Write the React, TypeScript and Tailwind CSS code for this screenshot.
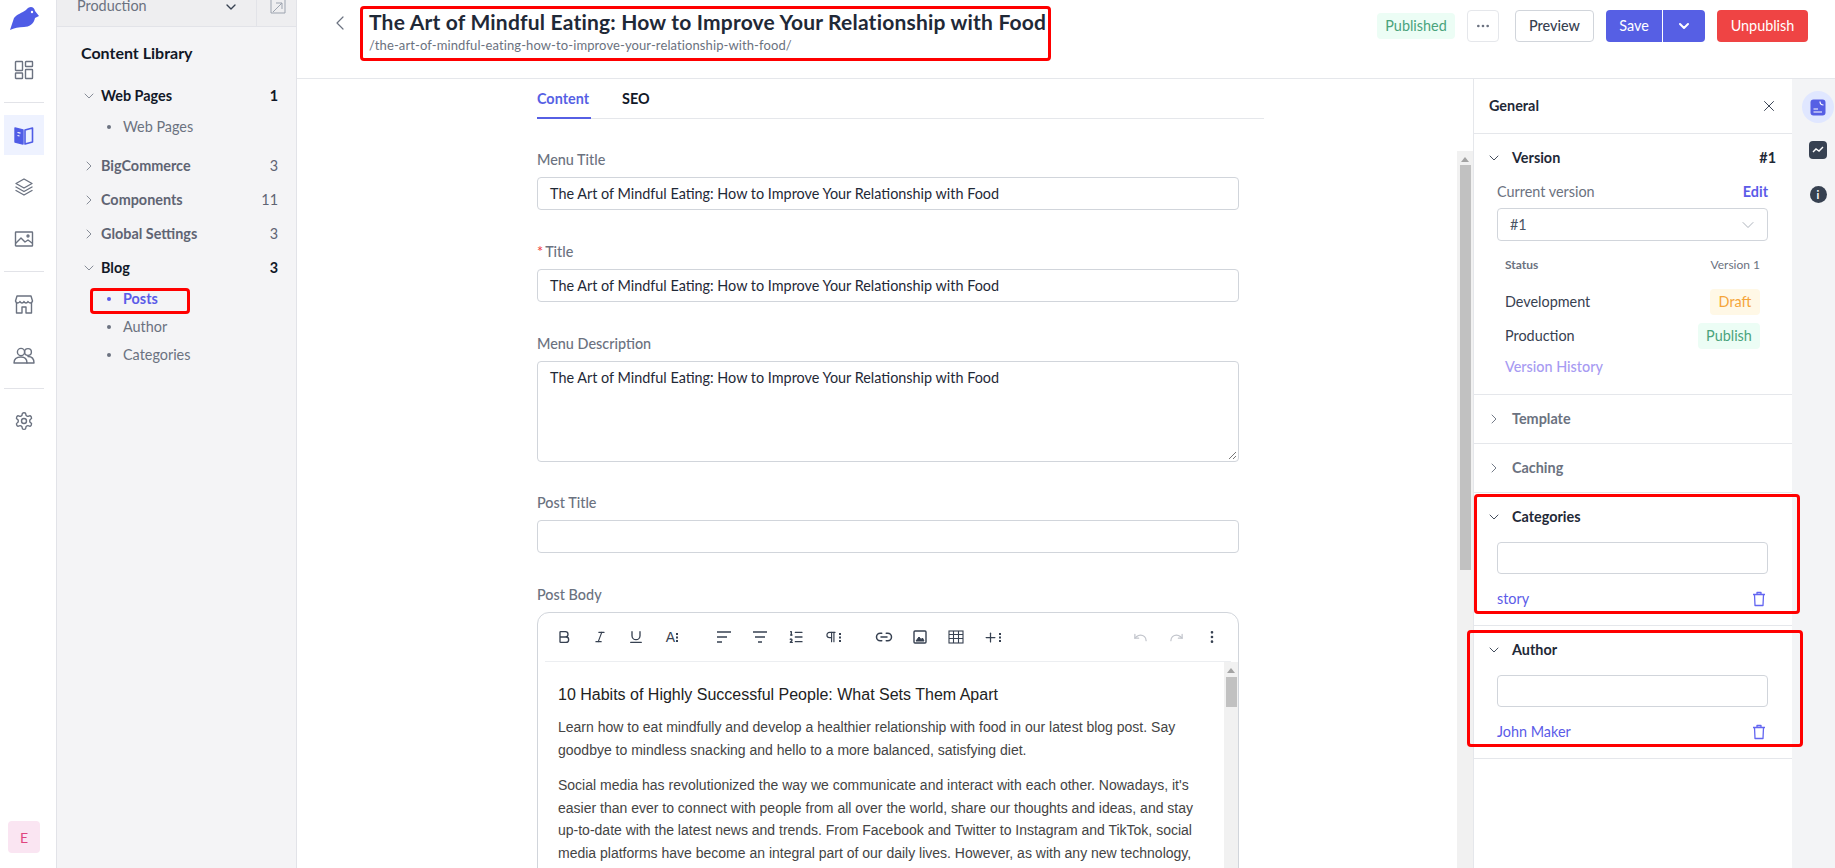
import React from "react";
import {
  ChevronDown, ChevronRight, ChevronLeft, X, MoreHorizontal, MoreVertical,
  Bold, Italic, Underline, Link2, Plus, Undo, Redo, ListOrdered, Pilcrow,
} from "lucide-react";

const ui = "font-['Lato',sans-serif]";

function RailDivider() {
  return <div className="h-px w-10 bg-[#e2e3e8]" />;
}

function RailIcon({ children, active }: { children: React.ReactNode; active?: boolean }) {
  return (
    <div className={`w-10 h-10 flex items-center justify-center ${active ? "bg-[#eef2ff]" : ""}`}>
      {children}
    </div>
  );
}

const stroke = { fill: "none", stroke: "#6b7280", strokeWidth: 1.4, strokeLinecap: "round", strokeLinejoin: "round" } as const;

function LeftRail() {
  return (
    <div className="w-[57px] shrink-0 h-full bg-white border-r border-[#e2e3e8] flex flex-col pl-1">
      <div className="h-[42px] flex items-start pl-[5px] pt-[6px]">
        <svg width="30" height="25" viewBox="0 0 30 25">
          <path d="M1 24 L5 12 C8 8 13 7 17 4 C20 0 25 0 26 5 L30 10 L26 12 C25 18 20 21 15 21 C10 21 5 22 1 24Z" fill="#4f5ce6" />
          <circle cx="23" cy="6" r="1.2" fill="#fff" />
        </svg>
      </div>
      <div className="h-[8px]" />
      <div className="h-[40px] w-10 flex items-center justify-center">
        <svg width="20" height="20" viewBox="0 0 20 20" {...stroke}>
          <rect x="1.5" y="1.5" width="7" height="9" rx="0.5" /><rect x="11.5" y="1.5" width="7" height="5" rx="0.5" />
          <rect x="1.5" y="13" width="7" height="5.5" rx="0.5" /><rect x="11.5" y="9.5" width="7" height="9" rx="0.5" />
        </svg>
      </div>
      <div className="h-3" />
      <RailDivider />
      <div className="h-3" />
      <RailIcon active>
        <svg width="20" height="20" viewBox="0 0 20 20">
          <path d="M1 3 L9 5 V19 L1 17Z" fill="#4f5ce6" stroke="#4f5ce6" strokeWidth="1.4" strokeLinejoin="round" />
          <path d="M11 5 L18.5 3 V17 L11 19Z" fill="none" stroke="#4f5ce6" strokeWidth="1.6" strokeLinejoin="round" />
          <path d="M3.5 7.5 L6.5 8.2 M3.5 10.5 L5.5 11" stroke="#fff" strokeWidth="1.2" />
        </svg>
      </RailIcon>
      <div className="h-3" />
      <RailIcon>
        <svg width="20" height="20" viewBox="0 0 20 20" {...stroke}>
          <path d="M10 2 L18 6.5 L10 11 L2 6.5Z" /><path d="M2 10 L10 14.5 L18 10" /><path d="M2 13.5 L10 18 L18 13.5" />
        </svg>
      </RailIcon>
      <div className="h-3" />
      <RailIcon>
        <svg width="20" height="20" viewBox="0 0 20 20" {...stroke}>
          <rect x="1.5" y="3" width="17" height="14" rx="0.5" /><path d="M2 14 L7 9 L11 13 L14 11 L18 14" /><circle cx="14" cy="7" r="1" />
        </svg>
      </RailIcon>
      <div className="h-3" />
      <RailDivider />
      <div className="h-3" />
      <RailIcon>
        <svg width="20" height="20" viewBox="0 0 20 20" {...stroke}>
          <path d="M2.5 9 V19 H8 V13 H12 V19 H17.5 V9" /><path d="M3 2 H17 L18.5 7 C18 9.5 15 9.5 14 7.5 C13 9.5 11 9.5 10 7.5 C9 9.5 7 9.5 6 7.5 C5 9.5 2 9.5 1.5 7 Z" />
        </svg>
      </RailIcon>
      <div className="h-3" />
      <RailIcon>
        <svg width="22" height="20" viewBox="0 0 22 20" {...stroke}>
          <circle cx="8" cy="6" r="3.6" /><circle cx="15" cy="6" r="3.4" /><path d="M1 17 C1 12 4 11 8 11 C12 11 14 13 14 17 Z" /><path d="M15 10.5 C19 10.5 21 12.5 21 17 H14" />
        </svg>
      </RailIcon>
      <div className="h-3" />
      <RailDivider />
      <div className="h-3" />
      <RailIcon>
        <svg width="20" height="20" viewBox="0 0 24 24" {...stroke} strokeWidth={1.7}>
          <path d="M12.22 2h-.44a2 2 0 0 0-2 2v.18a2 2 0 0 1-1 1.73l-.43.25a2 2 0 0 1-2 0l-.15-.08a2 2 0 0 0-2.73.73l-.22.38a2 2 0 0 0 .73 2.73l.15.1a2 2 0 0 1 1 1.72v.51a2 2 0 0 1-1 1.74l-.15.09a2 2 0 0 0-.73 2.73l.22.38a2 2 0 0 0 2.73.73l.15-.08a2 2 0 0 1 2 0l.43.25a2 2 0 0 1 1 1.73V20a2 2 0 0 0 2 2h.44a2 2 0 0 0 2-2v-.18a2 2 0 0 1 1-1.73l.43-.25a2 2 0 0 1 2 0l.15.08a2 2 0 0 0 2.73-.73l.22-.39a2 2 0 0 0-.73-2.73l-.15-.08a2 2 0 0 1-1-1.74v-.5a2 2 0 0 1 1-1.74l.15-.09a2 2 0 0 0 .73-2.73l-.22-.38a2 2 0 0 0-2.73-.73l-.15.08a2 2 0 0 1-2 0l-.43-.25a2 2 0 0 1-1-1.73V4a2 2 0 0 0-2-2z" />
          <circle cx="12" cy="12" r="3" />
        </svg>
      </RailIcon>
      <div className="flex-1" />
      <div className="w-8 h-8 ml-1 mb-[15px] rounded bg-[#fae5f2] flex items-center justify-center text-[14px] text-[#e0457f]">E</div>
    </div>
  );
}

function TreeRow({ label, count, open, strong }: { label: string; count: string; open?: boolean; strong?: boolean }) {
  return (
    <div className={`flex items-center h-[34px] pl-[24px] pr-[18px] text-[14.4px] ${strong ? "text-[#111827]" : "text-[#5f6473]"}`}>
      {open ? (
        <ChevronDown size={16} strokeWidth={1.2} className="text-[#6b7280]" />
      ) : (
        <ChevronRight size={16} strokeWidth={1.2} className="text-[#6b7280]" />
      )}
      <span className="ml-[4px] flex-1 font-bold">{label}</span>
      <span className={strong ? "font-bold" : ""}>{count}</span>
    </div>
  );
}

function SubRow({ label, active }: { label: string; active?: boolean }) {
  return (
    <div className={`flex items-center h-7 pl-[50px] text-[14.4px] ${active ? "text-[#5b5be8] font-bold" : "text-[#6b7280]"}`}>
      <span className={`w-1 h-1 rounded-full mr-[12px] ${active ? "bg-[#5b5be8]" : "bg-[#6b7280]"}`} />
      {label}
    </div>
  );
}

function Sidebar() {
  return (
    <div className="w-[240px] shrink-0 h-full bg-[#f4f4f6] border-r border-[#e2e3e8] flex flex-col">
      <div className="h-[27px] shrink-0 bg-[#eeeef0] border-b border-[#e2e3e8] flex items-center text-[14.4px] text-[#6b7280]">
        <span className="pl-5 -mt-[15px] flex-1">Production</span>
        <ChevronDown size={16} className="-mt-3 mr-[17px] text-[#374151]" />
        <div className="w-px h-full bg-[#e2e3e8]" />
        <svg width="16" height="16" viewBox="0 0 16 16" fill="none" stroke="#9ca3af" className="mr-[10px] -mt-3 ml-[13px]">
          <path d="M1 1 V14 H15 V1 M3 13 L12 4 M6 4 H12 V10" />
        </svg>
      </div>
      <div className="pl-6 mt-4 h-5 flex items-center text-[16px] font-bold text-[#111827]">Content Library</div>
      <div className="mt-[16px]">
        <TreeRow label="Web Pages" count="1" open strong />
        <SubRow label="Web Pages" />
        <div className="h-[8px]" />
        <TreeRow label="BigCommerce" count="3" />
        <TreeRow label="Components" count="11" />
        <TreeRow label="Global Settings" count="3" />
        <TreeRow label="Blog" count="3" open strong />
        <SubRow label="Posts" active />
        <SubRow label="Author" />
        <SubRow label="Categories" />
      </div>
    </div>
  );
}

function TopBar() {
  return (
    <div className="h-[79px] shrink-0 border-b border-[#e5e7eb] bg-white flex items-start">
      <ChevronLeft size={24} strokeWidth={1.2} className="ml-[31px] mt-[11px] text-[#6b7280]" />
      <div className="ml-[17px] mt-[9px] flex-1">
        <div className="text-[21px] leading-[26px] font-bold tracking-[0.2px] text-[#1f2937]">
          The Art of Mindful Eating: How to Improve Your Relationship with Food
        </div>
        <div className="text-[13px] leading-[20px] tracking-[0.1px] text-[#6b7280]">/the-art-of-mindful-eating-how-to-improve-your-relationship-with-food/</div>
      </div>
      <div className="flex items-center mt-[10px] mr-[27px] text-[14.4px]">
        <div className="h-[26px] w-[78px] rounded bg-[#ecfdf5] text-[#4aa37c] flex items-center justify-center">Published</div>
        <div className="ml-3 w-8 h-8 rounded border border-[#e5e7eb] flex items-center justify-center">
          <MoreHorizontal size={16} className="text-[#6b7280]" />
        </div>
        <div className="ml-4 w-[79px] h-8 rounded border border-[#d1d5db] flex items-center justify-center font-medium text-[#374151]">Preview</div>
        <div className="ml-3 w-[56px] h-8 rounded-l bg-[#565fe4] text-white flex items-center justify-center">Save</div>
        <div className="ml-px w-[42px] h-8 rounded-r bg-[#565fe4] text-white flex items-center justify-center">
          <ChevronDown size={16} strokeWidth={3} />
        </div>
        <div className="ml-3 w-[91px] h-8 rounded bg-[#ef4444] text-white flex items-center justify-center">Unpublish</div>
      </div>
    </div>
  );
}

function FieldLabel({ children }: { children: React.ReactNode }) {
  return <div className="h-[22px] -mt-px mb-[6px] flex items-center text-[14.4px] text-[#6b7280] font-medium">{children}</div>;
}

function Field({ label, h = "h-[33px]", value, required, gap = "mb-[32px]", resize }: { label: string; h?: string; value?: string; required?: boolean; gap?: string; resize?: boolean }) {
  return (
    <div className={gap}>
      <FieldLabel>
        {required && <span className="text-[#ef4444] mr-[2px]">*</span>}
        {label}
      </FieldLabel>
      <div className={`relative ${h} w-[702px] rounded border border-[#d1d5db] px-3 flex items-start pt-[5px] text-[14.4px] text-[#1f2937]`}>
        {value}
        {resize && (
          <svg width="9" height="9" viewBox="0 0 9 9" stroke="#777" className="absolute right-px bottom-px">
            <path d="M1 8 L8 1 M5 8 L8 5" />
          </svg>
        )}
      </div>
    </div>
  );
}

function Tool({ children, cls = "" }: { children: React.ReactNode; cls?: string }) {
  return <div className={`w-[18px] h-[18px] flex items-center justify-center text-[#374151] ${cls}`}>{children}</div>;
}

function Dots() {
  return (
    <svg width="2" height="10" viewBox="0 0 2 10" fill="#374151" className="ml-px">
      <rect y="1" width="2" height="2" /><rect y="4.5" width="2" height="2" /><rect y="8" width="2" height="2" />
    </svg>
  );
}

function Editor() {
  return (
    <div className="w-[702px] h-[300px] rounded-xl border border-[#d1d5db] overflow-hidden">
      <div className="h-[49px] mx-[7px] border-b border-[#eceef1] flex items-center pl-[10px] pr-[10px]">
        <Tool><Bold size={16} strokeWidth={2} /></Tool>
        <Tool cls="ml-[18px]"><Italic size={14} /></Tool>
        <Tool cls="ml-[18px]"><Underline size={16} /></Tool>
        <Tool cls="ml-[18px] text-[14px]"><span className="font-['Liberation_Sans',sans-serif]">A</span><Dots /></Tool>
        <Tool cls="ml-[34px]">
          <svg width="16" height="14" viewBox="0 0 16 14" stroke="#374151" strokeWidth="1.5"><path d="M1 2 H15 M1 7 H11 M1 12 H6" /></svg>
        </Tool>
        <Tool cls="ml-[18px]">
          <svg width="16" height="14" viewBox="0 0 16 14" stroke="#374151" strokeWidth="1.5"><path d="M1 2 H15 M3 7 H13 M6 12 H10" /></svg>
        </Tool>
        <Tool cls="ml-[18px]"><ListOrdered size={16} /></Tool>
        <Tool cls="ml-[18px]"><Pilcrow size={14} /><Dots /></Tool>
        <Tool cls="ml-[34px]"><Link2 size={18} strokeWidth={2} /></Tool>
        <Tool cls="ml-[18px]">
          <svg width="14" height="14" viewBox="0 0 14 14" fill="none" stroke="#374151"><rect x="1" y="1" width="12" height="12" strokeWidth="1.4" rx="1" /><path d="M3 11 L6 7 L8 9.5 L9.5 8 L11 11Z" fill="#374151" /></svg>
        </Tool>
        <Tool cls="ml-[18px]">
          <svg width="16" height="14" viewBox="0 0 16 14" fill="none" stroke="#374151" strokeWidth="1.1"><rect x="1" y="1" width="14" height="12" /><path d="M1 4.5 H15 M1 8.5 H15 M5.5 1 V13 M10.5 1 V13" /></svg>
        </Tool>
        <Tool cls="ml-[18px]"><Plus size={15} strokeWidth={2} /><Dots /></Tool>
        <div className="flex-1" />
        <Tool cls="text-[#c2c5cc]"><Undo size={15} /></Tool>
        <Tool cls="ml-[18px] text-[#c2c5cc]"><Redo size={15} /></Tool>
        <Tool cls="ml-[18px]"><MoreVertical size={16} /></Tool>
      </div>
      <div className="relative h-[250px] pl-5 pr-[22px] font-['Liberation_Sans',sans-serif] text-[14px] leading-[22.5px] text-[#444]">
        <div className="pt-[22px] text-[16px] leading-[22px] text-[#222]">10 Habits of Highly Successful People: What Sets Them Apart</div>
        <p className="mt-[10px]">Learn how to eat mindfully and develop a healthier relationship with food in our latest blog post. Say goodbye to mindless snacking and hello to a more balanced, satisfying diet.</p>
        <p className="mt-[13px]">Social media has revolutionized the way we communicate and interact with each other. Nowadays, it's easier than ever to connect with people from all over the world, share our thoughts and ideas, and stay up-to-date with the latest news and trends. From Facebook and Twitter to Instagram and TikTok, social media platforms have become an integral part of our daily lives. However, as with any new technology,</p>
        <div className="absolute right-0 top-0 bottom-0 w-[14px] bg-[#f1f1f1] flex flex-col items-center">
          <div className="mt-[6px] w-0 h-0 border-x-[4px] border-x-transparent border-b-[5px] border-b-[#a3a3a3]" />
          <div className="mt-[4px] w-[11px] h-[30px] bg-[#c1c1c1]" />
        </div>
      </div>
    </div>
  );
}

function MainForm() {
  return (
    <div className="relative flex-1 min-w-0 h-full overflow-hidden">
      <div className="ml-[240px] w-[727px]">
        <div className="flex h-[40px] border-b border-[#e5e7eb] text-[14.4px] font-bold">
          <div className="w-[54px] h-[40px] pt-px border-b-2 border-[#565fe4] text-[#565fe4] flex items-center">Content</div>
          <div className="ml-[31px] h-[40px] flex items-center text-[#111827]">SEO</div>
        </div>
        <div className="mt-[31px]">
          <Field label="Menu Title" value="The Art of Mindful Eating: How to Improve Your Relationship with Food" />
          <Field label="Title" required value="The Art of Mindful Eating: How to Improve Your Relationship with Food" />
          <Field label="Menu Description" h="h-[101px]" gap="mb-[31px]" resize value="The Art of Mindful Eating: How to Improve Your Relationship with Food" />
          <Field label="Post Title" />
          <FieldLabel>Post Body</FieldLabel>
          <Editor />
        </div>
      </div>
      <div className="absolute right-0 top-[72px] bottom-0 w-[16px] bg-[#f1f1f1] flex flex-col items-center">
        <div className="mt-[6px] w-0 h-0 border-x-[4px] border-x-transparent border-b-[5px] border-b-[#a3a3a3]" />
        <div className="mt-[3px] w-[11px] h-[405px] bg-[#c1c1c1]" />
      </div>
    </div>
  );
}

function SectionHead({ label, open, right, muted }: { label: string; open?: boolean; right?: string; muted?: boolean }) {
  return (
    <div className={`flex items-center h-[22px] -mt-px -mb-px pl-[12px] pr-4 text-[14.4px] font-bold ${muted ? "text-[#6b7280]" : "text-[#1f2937]"}`}>
      {open ? (
        <ChevronDown size={16} strokeWidth={1.4} className="text-[#374151]" />
      ) : (
        <ChevronRight size={16} strokeWidth={1.4} className="text-[#6b7280]" />
      )}
      <span className="ml-[10px] flex-1">{label}</span>
      {right && <span>{right}</span>}
    </div>
  );
}

function PickList({ item }: { item: string }) {
  return (
    <>
      <div className="ml-[23px] mr-6 mt-[15px] h-[32px] rounded border border-[#d1d5db]" />
      <div className="ml-[23px] mr-6 mt-[15px] h-5 flex items-center justify-between pr-[2px] text-[14.4px] text-[#5b5be8]">
        {item}
        <svg width="14" height="16" viewBox="0 0 14 16" fill="none" stroke="#6366f1" strokeWidth="1.3" strokeLinejoin="round">
          <path d="M1 3.5 H13 M5 3.5 V1.5 H9 V3.5 M2.5 3.5 L3 14.5 H11 L11.5 3.5" />
        </svg>
      </div>
    </>
  );
}

function GeneralPanel() {
  return (
    <div className="w-[319px] shrink-0 h-full border-l border-[#e5e7eb] bg-white">
      <div className="h-[55px] border-b border-[#e5e7eb] flex items-center justify-between pl-[15px] pr-[14px] text-[14.4px] font-bold text-[#1f2937]">
        General
        <X size={18} strokeWidth={1.3} className="text-[#374151]" />
      </div>
      <div className="h-[261px] border-b border-[#e5e7eb] pt-[14px]">
        <SectionHead label="Version" open right="#1" />
        <div className="ml-[23px] mr-6 mt-[13px] h-[22px] -mb-[2px] flex items-center justify-between text-[14.4px] text-[#6b7280]">
          Current version
          <span className="text-[#5b5be8] font-bold">Edit</span>
        </div>
        <div className="ml-[23px] mr-6 mt-[7px] h-[33px] rounded border border-[#d1d5db] flex items-center justify-between pl-3 pr-[9px] text-[14.4px] text-[#4b5563]">
          #1
          <ChevronDown size={20} strokeWidth={1} className="text-[#9ca3af]" />
        </div>
        <div className="ml-[31px] mr-8 mt-[16px] h-4 flex items-center justify-between text-[12px] text-[#6b7280]">
          <span className="font-bold">Status</span>
          <span>Version 1</span>
        </div>
        <div className="ml-[31px] mr-8 mt-[16px] h-[26px] flex items-center justify-between text-[14.4px] text-[#374151]">
          Development
          <span className="h-[26px] w-[50px] rounded bg-[#fff8e6] text-[#f5a53a] flex items-center justify-center">Draft</span>
        </div>
        <div className="ml-[31px] mr-8 mt-[8px] h-[26px] flex items-center justify-between text-[14.4px] text-[#374151]">
          Production
          <span className="h-[26px] w-[62px] rounded bg-[#ecfdf5] text-[#4aa37c] flex items-center justify-center">Publish</span>
        </div>
        <div className="ml-[31px] mt-[8px] h-5 flex items-center text-[14.4px] font-medium text-[#a79bf2]">Version History</div>
      </div>
      <div className="h-[49px] border-b border-[#e5e7eb] flex items-center"><div className="w-full"><SectionHead label="Template" muted /></div></div>
      <div className="h-[49px] border-b border-[#e5e7eb] flex items-center"><div className="w-full"><SectionHead label="Caching" muted /></div></div>
      <div className="h-[133px] border-b border-[#e5e7eb] pt-[14px]">
        <SectionHead label="Categories" open />
        <PickList item="story" />
      </div>
      <div className="h-[133px] border-b border-[#e5e7eb] pt-[14px]">
        <SectionHead label="Author" open />
        <PickList item="John Maker" />
      </div>
    </div>
  );
}

function RightRail() {
  return (
    <div className="w-[43px] shrink-0 h-full bg-[#f3f4f6] flex flex-col items-center pt-3 pl-[9px]">
      <div className="w-8 h-8 rounded-full bg-[#e0e7ff] flex items-center justify-center">
        <svg width="16" height="17" viewBox="0 0 16 17">
          <rect width="15" height="16" x="0.5" y="0.5" rx="3" fill="#565fe4" />
          <path d="M3.5 10 H8 M3.5 13 H12" stroke="#fff" strokeWidth="1.2" />
          <path d="M10 2.5 C10 5 11 6 13.5 6" stroke="#fff" strokeWidth="1.2" fill="none" />
        </svg>
      </div>
      <div className="mt-[18px] w-[18px] h-[18px] rounded bg-[#374151] flex items-center justify-center">
        <svg width="12" height="8" viewBox="0 0 12 8" fill="none" stroke="#fff" strokeWidth="1.4"><path d="M1 6 L4 3 L7 5 L11 1" /></svg>
      </div>
      <div className="mt-[27px] w-[17px] h-[17px] rounded-full bg-[#374151] flex items-center justify-center text-white text-[11px] font-bold leading-none">i</div>
    </div>
  );
}

export default function App() {
  return (
    <div className={`relative w-[1835px] h-[868px] overflow-hidden flex bg-white ${ui}`}>
      <LeftRail />
      <Sidebar />
      <div className="flex-1 min-w-0 h-full flex flex-col">
        <TopBar />
        <div className="flex-1 min-h-0 flex">
          <MainForm />
          <GeneralPanel />
          <RightRail />
        </div>
      </div>
      {/* red annotation boxes sit on top of the page */}
      <div className="absolute left-[360px] top-[6px] w-[691px] h-[55px] border-[3px] border-[#f00] rounded-sm" />
      <div className="absolute left-[90px] top-[288px] w-[100px] h-[26px] border-[3px] border-[#f00] rounded-sm" />
      <div className="absolute left-[1474px] top-[494px] w-[326px] h-[120px] border-[3px] border-[#f00] rounded-sm" />
      <div className="absolute left-[1467px] top-[630px] w-[336px] h-[117px] border-[3px] border-[#f00] rounded-sm" />
    </div>
  );
}
